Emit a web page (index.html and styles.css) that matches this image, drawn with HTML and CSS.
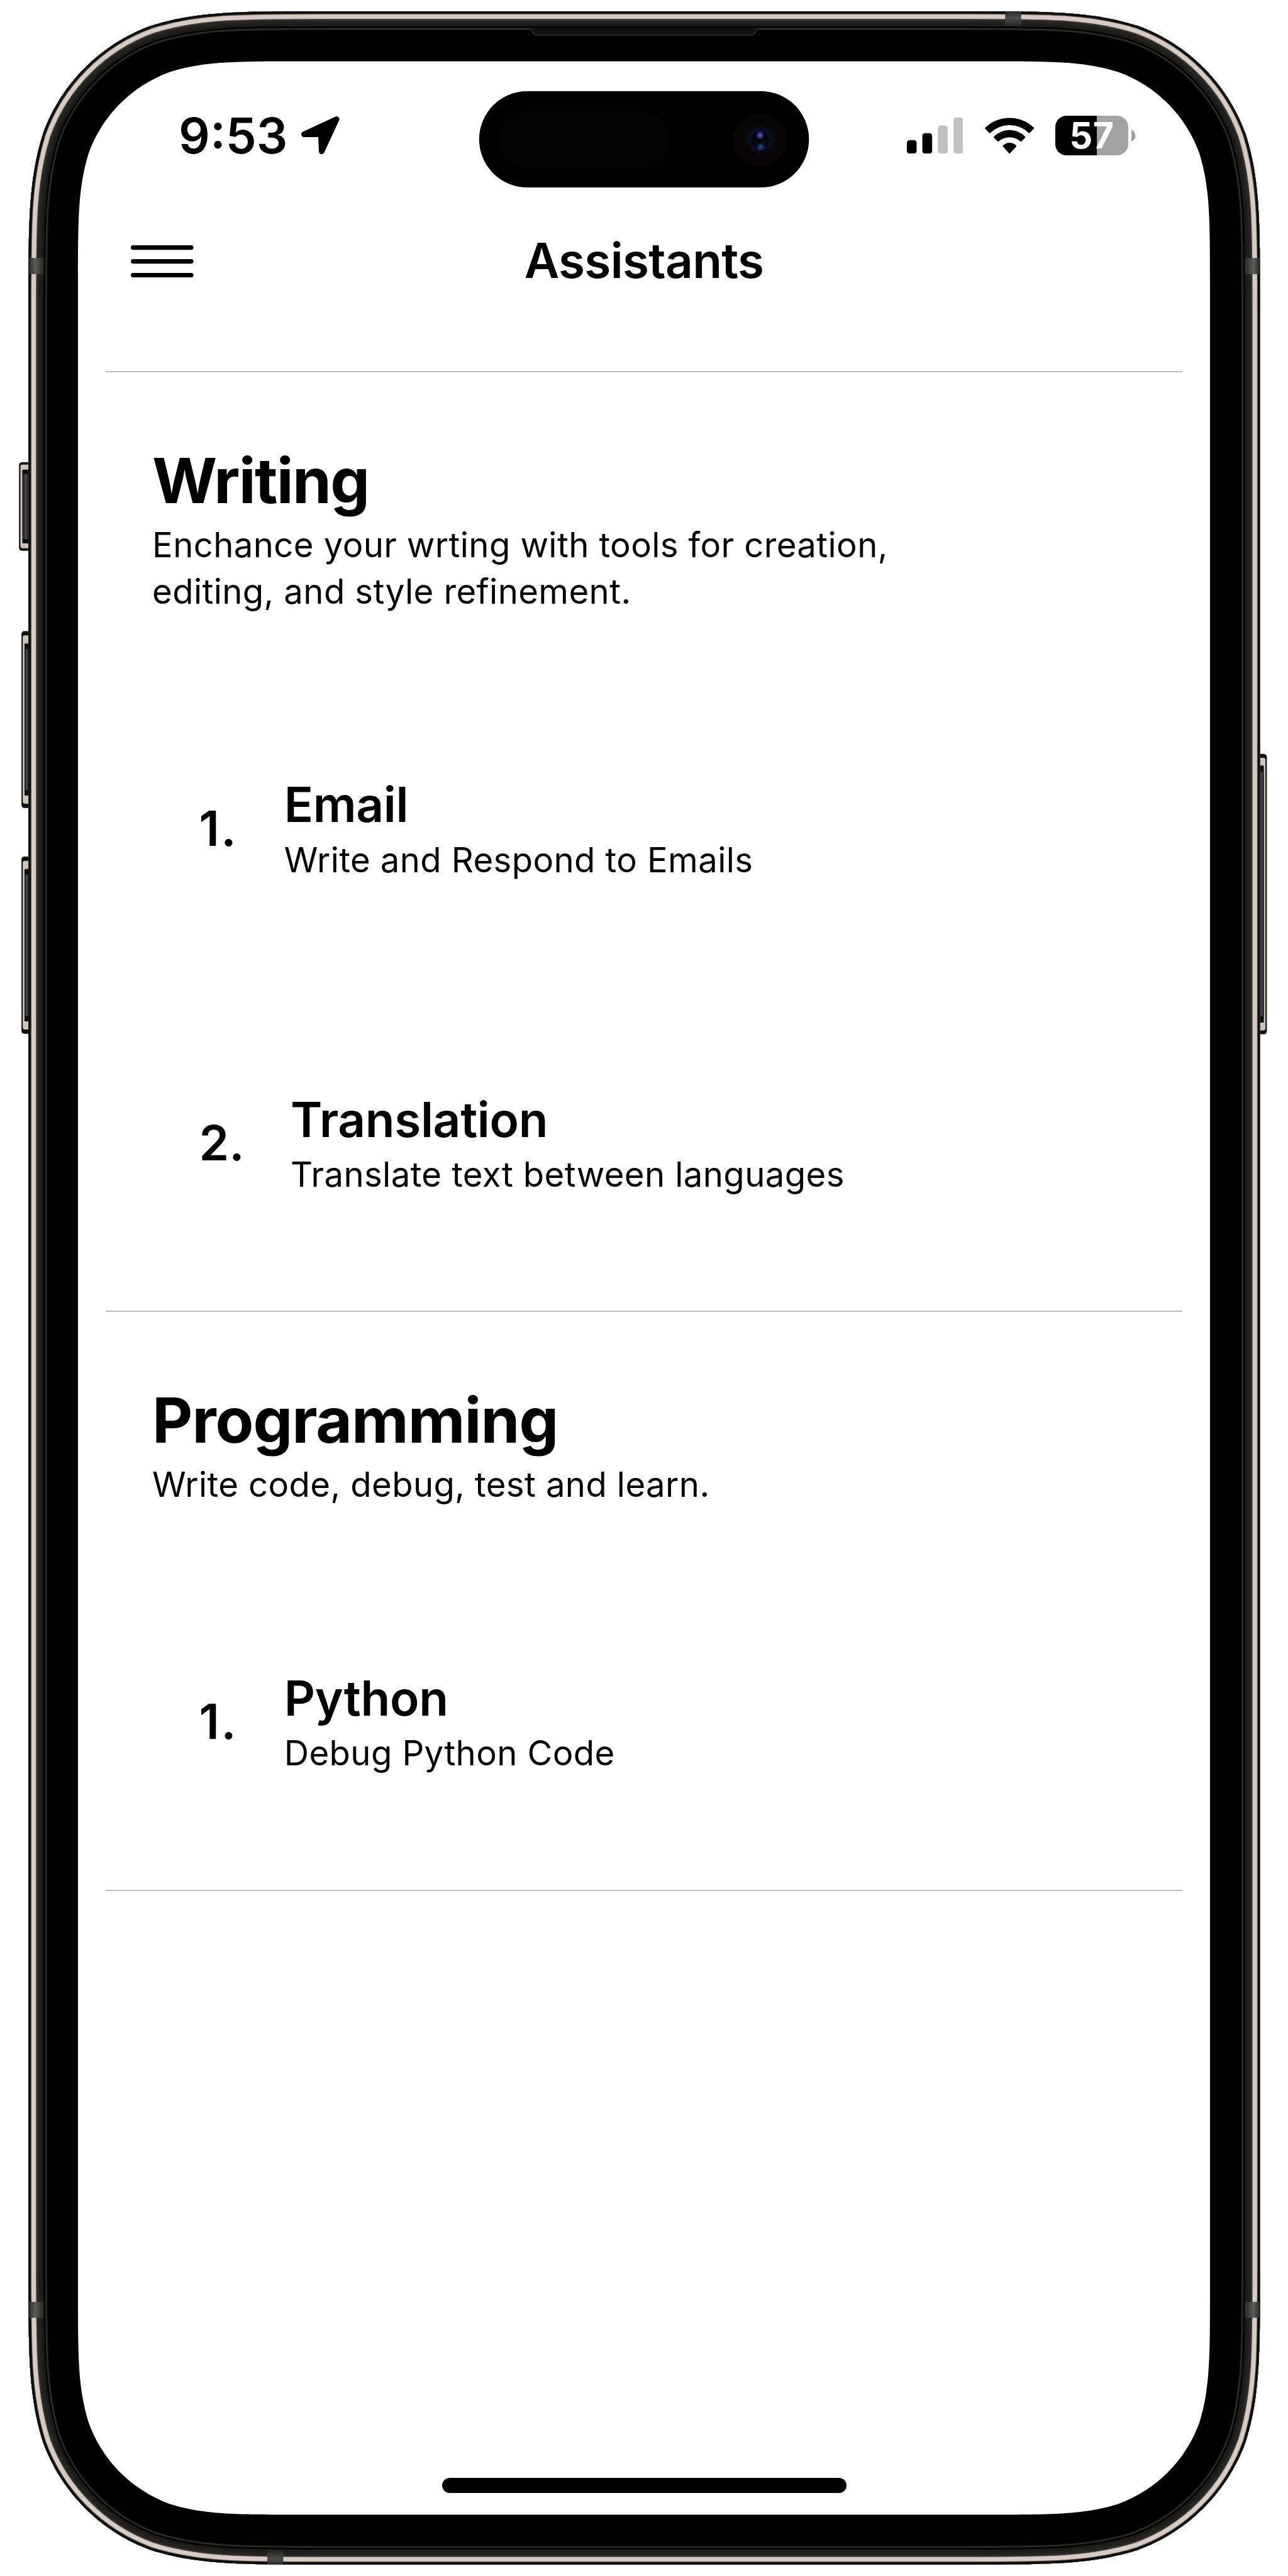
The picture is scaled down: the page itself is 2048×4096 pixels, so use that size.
FILE: index.html
```html
<!DOCTYPE html>
<html lang="en">
<head>
<meta charset="utf-8">
<title>Assistants</title>
<link rel="stylesheet" href="styles.css">
</head>
<body>
<div class="phone">
  <svg class="bezel" viewBox="0 0 3000 6000" aria-hidden="true">
    <defs>
      <path id="body" d="M757.3 26.3H2244c199 0 298.5 0 405.6 33.9c116.9 42.5 209 134.6 251.5 251.5c33.9 107.1 33.9 206.6 33.9 405.6V5282.3c0 199 0 298.5-33.9 405.6c-42.5 116.9-134.6 209-251.5 251.5c-107.1 33.9-206.6 33.9-405.6 33.9H757.3c-199 0-298.5 0-405.6-33.9c-116.9-42.5-209-134.6-251.5-251.5c-33.9-107.1-33.9-206.6-33.9-405.6V717.3c0-199 0-298.5 33.9-405.6c42.5-116.9 134.6-209 251.5-251.5c107.1-33.9 206.6-33.9 405.6-33.9z"/>
      <clipPath id="body-clip"><use href="#body"/></clipPath>
      <linearGradient id="band-l"><stop offset="0" stop-color="#2c2d2c"/><stop offset=".4" stop-color="#5c5c5b"/><stop offset="1" stop-color="#262625"/></linearGradient>
      <linearGradient id="band-r"><stop offset="0" stop-color="#262625"/><stop offset=".6" stop-color="#5c5c5b"/><stop offset="1" stop-color="#2c2d2c"/></linearGradient>
      <linearGradient id="band-t" x2="0" y2="1"><stop offset="0" stop-color="#2c2e2d"/><stop offset=".4" stop-color="#4c4d4c"/><stop offset="1" stop-color="#262625"/></linearGradient>
      <linearGradient id="band-b" x2="0" y2="1"><stop offset="0" stop-color="#1e1e1d"/><stop offset=".65" stop-color="#4c4c4b"/><stop offset="1" stop-color="#2c2e2d"/></linearGradient>
      <linearGradient id="key"><stop offset="0" stop-color="#1c1b1a"/><stop offset=".5" stop-color="#4c4746"/><stop offset="1" stop-color="#1c1b1a"/></linearGradient>
      <linearGradient id="lens" x2="0" y2="1"><stop offset="0" stop-color="#060606"/><stop offset="1" stop-color="#0a0508"/></linearGradient>
      <radialGradient id="glint-a"><stop offset="0" stop-color="#5a63c8"/><stop offset=".5" stop-color="#302f8a"/><stop offset="1" stop-color="#0a0a30" stop-opacity="0"/></radialGradient>
      <radialGradient id="glint-b" cy=".6"><stop offset="0" stop-color="#1f6a72"/><stop offset=".5" stop-color="#102a55"/><stop offset="1" stop-color="#0a0a30" stop-opacity="0"/></radialGradient>
    </defs>

    <!-- side buttons -->
    <g class="key">
      <rect class="key-edge" x="44.3" y="1076.5" width="40" height="206.5" rx="7"/>
      <rect class="key-rim" x="47.5" y="1082" width="40" height="195" rx="5"/>
      <rect class="key-edge" x="52" y="1094" width="30" height="171.500" rx="2"/>
      <rect fill="url(#key)" x="53" y="1104" width="14" height="152"/>
    </g>
    <g class="key">
      <rect class="key-edge" x="50" y="1470" width="40" height="412" rx="7"/>
      <rect class="key-rim" x="53" y="1480" width="36" height="392" rx="5"/>
      <rect class="key-edge" x="57" y="1499" width="30" height="354" rx="2"/>
      <rect fill="url(#key)" x="57" y="1512" width="10" height="328"/>
    </g>
    <g class="key">
      <rect class="key-edge" x="50" y="1995" width="40" height="413" rx="7"/>
      <rect class="key-rim" x="53" y="2005" width="36" height="393" rx="5"/>
      <rect class="key-edge" x="57" y="2024" width="30" height="355" rx="2"/>
      <rect fill="url(#key)" x="57" y="2037" width="10" height="329"/>
    </g>
    <g class="key">
      <rect class="key-edge" x="2910" y="1756" width="40.700" height="653" rx="7"/>
      <rect class="key-rim" x="2910" y="1765" width="37.500" height="635" rx="5"/>
      <rect class="key-edge" x="2910" y="1783" width="33.700" height="599" rx="2"/>
      <rect fill="url(#key)" x="2934" y="1798" width="10" height="569"/>
    </g>

    <!-- layered frame: each stroke is clipped to its inner half -->
    <g clip-path="url(#body-clip)">
      <use href="#body" fill="#000"/>
      <use href="#body" class="ring" stroke="#161616" stroke-width="88"/>
      <use href="#body" class="ring" stroke="#292929" stroke-width="85"/>
      <use href="#body" class="ring" stroke="#030303" stroke-width="78"/>
      <use href="#body" class="ring" stroke="#1b1b19" stroke-width="70"/>
      <use href="#body" class="ring" stroke="#22211f" stroke-width="58"/>
      <use href="#body" class="ring" stroke="#2a2926" stroke-width="46"/>
      <use href="#body" class="ring" stroke="#57504a" stroke-width="38"/>
      <use href="#body" class="ring" stroke="#a89f97" stroke-width="35.5"/>
      <use href="#body" class="ring" stroke="#d6ccc5" stroke-width="33.5"/>
      <use href="#body" class="ring" stroke="#8a8079" stroke-width="14.5"/>
      <use href="#body" class="ring" stroke="#3c3733" stroke-width="12.5"/>
      <use href="#body" class="ring" stroke="#0b0c0b" stroke-width="10"/>
      <rect x="68" y="601" width="34" height="37.5" fill="url(#band-l)"/>
      <rect x="68" y="5361.5" width="34" height="37" fill="url(#band-l)"/>
      <rect x="2899" y="601" width="34" height="37.5" fill="url(#band-r)"/>
      <rect x="2899" y="5361.5" width="34" height="37" fill="url(#band-r)"/>
      <rect x="2341" y="28" width="37.5" height="33" fill="url(#band-t)"/>
      <rect x="622.4" y="5938" width="37.4" height="34" fill="url(#band-b)"/>
    </g>

    <!-- earpiece -->
    <path d="M1236.6 64H1763.5C1760 70 1761 83.3 1750 83.3H1250C1239 83.3 1240 70 1236.6 64z" fill="#111"/>
    <path d="M1237.5 67C1240 72 1241 81.8 1250 81.8H1750C1759 81.8 1760 72 1762.5 67" fill="none" stroke="#272727" stroke-width="3"/>

    <!-- display glass -->
    <path fill="#fff" d="M696.9 143H2303.1c148.4 0 222.5 0 302.4 25.2c87.2 31.8 155.8 100.4 187.6 187.6c25.2 79.9 25.2 154 25.2 302.4V5341.8c0 148.4 0 222.5-25.2 302.4c-31.8 87.2-100.4 155.8-187.6 187.6c-79.9 25.2-154 25.2-302.4 25.2H696.9c-148.4 0-222.5 0-302.4-25.2c-87.2-31.8-155.8-100.4-187.6-187.6c-25.2-79.9-25.2-154-25.2-302.4V658.2c0-148.4 0-222.5 25.2-302.4c31.8-87.2 100.4-155.8 187.6-187.6c79.9-25.2 154-25.2 302.4-25.2z"/>

    <!-- sensor island -->
    <rect x="1116" y="212.3" width="768.3" height="224.4" rx="112.2"/>
    <rect x="1163" y="258" width="395.5" height="135" rx="67.5" fill="#040404"/>
    <circle cx="1770.3" cy="325" r="62" fill="url(#lens)"/>
    <circle cx="1770.8" cy="325.5" r="33.5" fill="#0b0b14"/>
    <circle cx="1770.8" cy="325" r="23.5" fill="#06060e" stroke="#0d0d3c" stroke-width="3"/>
    <circle cx="1770.3" cy="315" r="11" fill="url(#glint-a)"/>
    <circle cx="1772" cy="340" r="12" fill="url(#glint-b)"/>
    <circle cx="1772" cy="346.5" r="3" fill="#4a0a80"/>
  </svg>

  <main class="screen">
    <header class="status">
      <div class="clock">
        <span class="time">9:53</span>
        <svg class="location" viewBox="0 0 89 89"><path d="M6.5 41.8L82.3 6.5L47.5 81.5L45.8 41.8z" stroke="#000" stroke-width="13" stroke-linejoin="round"/></svg>
      </div>
      <div class="indicators">
        <svg class="signal" viewBox="0 0 131.3 84">
          <rect x="0" y="52.3" width="22.7" height="31.7" rx="6.5"/>
          <rect x="36" y="36.3" width="22.9" height="47.7" rx="6.5"/>
          <rect x="72.4" y="18.3" width="22.6" height="65.7" rx="6.5" fill="#c1c1c1"/>
          <rect x="108.5" y="0" width="22.8" height="84" rx="6.5" fill="#c1c1c1"/>
        </svg>
        <svg class="wifi" viewBox="0 0 115 84.3">
          <g stroke="#000" stroke-width="3" stroke-linejoin="round">
            <path d="M1.8 24.7A80 80 0 0 1 113.2 24.7L103.5 34.7A66 66 0 0 0 11.5 34.7z"/>
            <path d="M22 45.6A49 49 0 0 1 93 45.6L84 54.5A40 40 0 0 0 31 54.5z"/>
            <path d="M43 66.3A20 20 0 0 1 72 66.3L57.5 82.2z"/>
          </g>
        </svg>
        <div class="battery">
          <div class="charge"><span class="level">57</span></div>
          <svg class="nub" viewBox="0 0 9.2 28.6"><path d="M0 0Q9.2 5.300 9.2 14.300T0 28.600z" fill="#a3a3a3"/></svg>
        </div>
      </div>
    </header>

    <nav class="topbar">
      <svg class="menu" viewBox="0 0 146 75"><path d="M5.25 5.25H140.75M5.25 37.5H140.75M5.25 69.75H140.75" stroke="#000" stroke-width="10.5" stroke-linecap="round"/></svg>
      <h1 class="page-title">Assistants</h1>
    </nav>

    <div class="sections">
      <section class="section">
        <h2 class="section-title tight">Writing</h2>
        <p class="text">Enchance your wrting with tools for creation,<br>editing, and style refinement.</p>
        <ol class="list">
          <li class="item">
            <span class="number one">1.</span>
            <div class="detail"><h3 class="name">Email</h3><p class="text">Write and Respond to Emails</p></div>
          </li>
          <li class="item">
            <span class="number">2.</span>
            <div class="detail"><h3 class="name">Translation</h3><p class="text">Translate text between languages</p></div>
          </li>
        </ol>
      </section>
      <section class="section">
        <h2 class="section-title">Programming</h2>
        <p class="text">Write code, debug, test and learn.</p>
        <ol class="list">
          <li class="item">
            <span class="number one">1.</span>
            <div class="detail"><h3 class="name">Python</h3><p class="text">Debug Python Code</p></div>
          </li>
        </ol>
      </section>
    </div>

    <div class="home-bar"></div>
  </main>
</div>
</body>
</html>
```
FILE: styles.css
```css
* { box-sizing: border-box; margin: 0; padding: 0; }

body {
  width: 2048px;
  height: 4096px;
  overflow: hidden;
  background: #fff;
  color: #000;
  font-family: Inter, "Liberation Sans", sans-serif;
}

/* The device drawing and the live screen share one grid cell. */
.phone { display: grid; width: 2048px; height: 4096px; }
.bezel, .screen { grid-area: 1 / 1; }
.bezel { display: block; width: 2048px; height: 4096px; }
.key-edge { fill: #0d0d0c; }
.key-rim { fill: #cdc3bb; }
.ring { fill: none; }

.screen {
  display: flex;
  flex-direction: column;
  margin: 97.6px 124px 97.4px;
}

.status {
  display: flex;
  flex: none;
  justify-content: space-between;
  align-items: center;
  height: 236px;
  padding: 0 119.2px 0 160px;
}
.status svg { display: block; flex: none; }
.clock { display: flex; align-items: center; gap: 22px; }
.time { font-size: 78px; font-weight: 600; line-height: 92px; }
.location { width: 60.8px; height: 60.8px; }
.indicators { display: flex; align-items: center; gap: 34.1px; }
.signal { width: 89.6px; height: 57.4px; }
.wifi { width: 78.5px; height: 57.5px; }
.battery { display: flex; align-items: center; gap: 4.5px; }
.charge {
  display: flex;
  align-items: center;
  justify-content: center;
  width: 115.9px;
  height: 63px;
  border-radius: 18px;
  background: linear-gradient(90deg, #000 66.4px, #a3a3a3 66.4px);
}
.level { color: #fff; font-size: 57.5px; font-weight: 650; line-height: 63px; letter-spacing: 0.5px; }
.nub { width: 6.3px; height: 19.5px; }

.topbar {
  display: grid;
  flex: none;
  grid-template-columns: 1fr auto 1fr;
  align-items: center;
  height: 164px;
  margin-bottom: 92.7px;
  padding: 0 84px;
}
.menu { display: block; width: 99.7px; height: 51.2px; }
.page-title { padding-bottom: 3.5px; font-size: 76.5px; font-weight: 600; line-height: 92px; letter-spacing: -0.7px; }

.sections { flex: none; margin: 0 44px; border-bottom: 2px solid #bdbdbd; }
.section {
  padding: 111.6px 0 179.6px 74px;
  border-top: 2px solid #bdbdbd;
}
.section-title { margin-bottom: 6px; font-size: 99.5px; font-weight: 700; line-height: 120px; letter-spacing: -1.05px; }
.section-title.tight { letter-spacing: -1.7px; }
.text { font-size: 54.5px; font-weight: 400; line-height: 73.7px; letter-spacing: 0.37px; white-space: nowrap; }

.list {
  display: flex;
  flex-direction: column;
  gap: 329.1px;
  margin-top: 256.1px;
  padding-left: 74.5px;
  list-style: none;
}
.item { display: flex; align-items: center; gap: 73.5px; }
.number { padding-bottom: 4.5px; font-size: 76.5px; font-weight: 600; line-height: 92px; }
.number.one { letter-spacing: 2.5px; }
.name { margin-bottom: 5.5px; font-size: 76.5px; font-weight: 600; line-height: 92px; letter-spacing: -0.35px; }

.home-bar {
  flex: none;
  align-self: center;
  width: 643px;
  height: 24px;
  margin-top: auto;
  margin-bottom: 34.6px;
  border-radius: 12px;
  background: #000;
}
```
